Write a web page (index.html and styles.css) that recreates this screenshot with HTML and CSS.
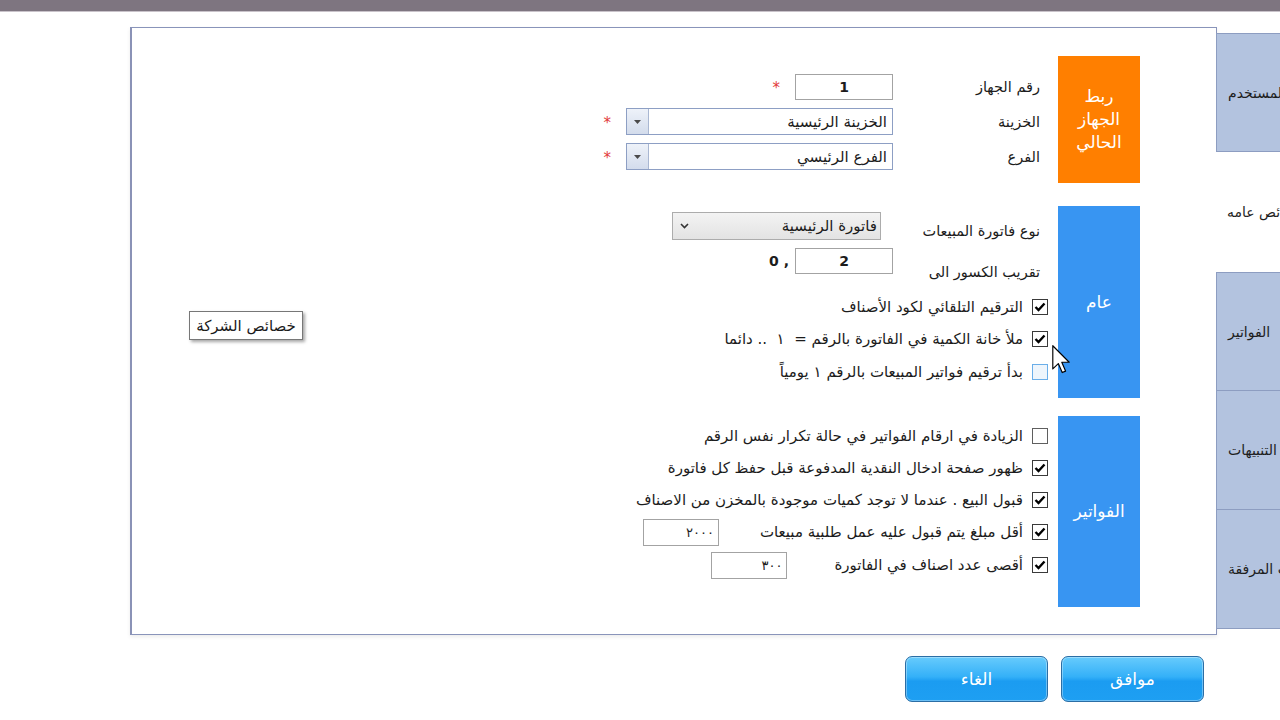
FILE: index.html
```html
<!DOCTYPE html>
<html lang="ar">
<head>
<meta charset="utf-8">
<title>خصائص عامه</title>
<link rel="stylesheet" href="styles.css">
</head>
<body>
<div class="topbar"></div>

<div class="stage">
  <div class="panel" dir="rtl">

    <section class="group g1">
      <div class="tag orange">ربط<br>الجهاز<br>الحالي</div>
      <div class="fields">
        <div class="frow">
          <span class="lbl">رقم الجهاز</span>
          <div class="txt bold">1</div>
          <span class="req">*</span>
        </div>
        <div class="frow">
          <span class="lbl">الخزينة</span>
          <div class="combo"><span class="cval">الخزينة الرئيسية</span><span class="cbtn"><svg width="7" height="4" viewBox="0 0 7 4"><path d="M0 0H7L3.5 4Z" fill="#4a4a4a"/></svg></span></div>
          <span class="req">*</span>
        </div>
        <div class="frow">
          <span class="lbl">الفرع</span>
          <div class="combo"><span class="cval">الفرع الرئيسي</span><span class="cbtn"><svg width="7" height="4" viewBox="0 0 7 4"><path d="M0 0H7L3.5 4Z" fill="#4a4a4a"/></svg></span></div>
          <span class="req">*</span>
        </div>
      </div>
    </section>

    <section class="group g2">
      <div class="tag blue">عام</div>
      <div class="fields">
        <div class="frow r-sel">
          <span class="lbl lbl-bottom">نوع فاتورة المبيعات</span>
          <div class="select"><span>فاتورة الرئيسية</span><svg class="chev" width="9" height="6" viewBox="0 0 9 6"><path d="M1 1L4.5 4.5L8 1" fill="none" stroke="#333" stroke-width="1.6"/></svg></div>
        </div>
        <div class="frow r-round">
          <span class="lbl lbl-low">تقريب الكسور الى</span>
          <div class="txt bold">2</div>
          <span class="frac" dir="ltr">0 ,</span>
        </div>
        <div class="checks c2">
          <div class="crow">
            <span class="cb on"><svg width="12" height="10" viewBox="0 0 12 10"><path d="M1.5 5L4.5 8L10.5 1.5" fill="none" stroke="#000" stroke-width="2.4"/></svg></span>
            <span class="ctext">الترقيم التلقائي لكود الأصناف</span>
          </div>
          <div class="crow s1">
            <span class="cb on"><svg width="12" height="10" viewBox="0 0 12 10"><path d="M1.5 5L4.5 8L10.5 1.5" fill="none" stroke="#000" stroke-width="2.4"/></svg></span>
            <span class="ctext">ملأ خانة الكمية في الفاتورة بالرقم =&nbsp; ١ &nbsp;.. دائما</span>
          </div>
          <div class="crow s2">
            <span class="cb hover"></span>
            <span class="ctext">بدأ ترقيم فواتير المبيعات بالرقم ١ يومياً</span>
          </div>
        </div>
      </div>
    </section>

    <section class="group g3">
      <div class="tag blue">الفواتير</div>
      <div class="fields">
        <div class="checks c3">
          <div class="crow">
            <span class="cb"></span>
            <span class="ctext">الزيادة في ارقام الفواتير في حالة تكرار نفس الرقم</span>
          </div>
          <div class="crow s1">
            <span class="cb on"><svg width="12" height="10" viewBox="0 0 12 10"><path d="M1.5 5L4.5 8L10.5 1.5" fill="none" stroke="#000" stroke-width="2.4"/></svg></span>
            <span class="ctext">ظهور صفحة ادخال النقدية المدفوعة قبل حفظ كل فاتورة</span>
          </div>
          <div class="crow s1">
            <span class="cb on"><svg width="12" height="10" viewBox="0 0 12 10"><path d="M1.5 5L4.5 8L10.5 1.5" fill="none" stroke="#000" stroke-width="2.4"/></svg></span>
            <span class="ctext">قبول البيع . عندما لا توجد كميات موجودة بالمخزن من الاصناف</span>
          </div>
          <div class="crow s1">
            <span class="cb on"><svg width="12" height="10" viewBox="0 0 12 10"><path d="M1.5 5L4.5 8L10.5 1.5" fill="none" stroke="#000" stroke-width="2.4"/></svg></span>
            <span class="ctext">أقل مبلغ يتم قبول عليه عمل طلبية مبيعات</span>
            <div class="txt small gap-a">٢٠٠٠</div>
          </div>
          <div class="crow s2">
            <span class="cb on"><svg width="12" height="10" viewBox="0 0 12 10"><path d="M1.5 5L4.5 8L10.5 1.5" fill="none" stroke="#000" stroke-width="2.4"/></svg></span>
            <span class="ctext">أقصى عدد اصناف في الفاتورة</span>
            <div class="txt small gap-b">٣٠٠</div>
          </div>
        </div>
      </div>
    </section>

  </div>

  <div class="tabs">
    <div class="tab t1"><span dir="rtl">خصائص المستخدم</span></div>
    <div class="tab selected"><span dir="rtl">خصائص عامه</span></div>
    <div class="tab t3"><span dir="rtl">الفواتير</span></div>
    <div class="tab t4"><span dir="rtl">التنبيهات</span></div>
    <div class="tab t5"><span dir="rtl">الملفات المرفقة</span></div>
  </div>
</div>

<div class="actions" dir="rtl">
  <button class="btn">موافق</button>
  <button class="btn">الغاء</button>
</div>

<div class="tooltip" dir="rtl">خصائص الشركة</div>

<svg class="cursor" width="19" height="29" viewBox="0 0 13 20"><path d="M0.5 0.5V16.5L4.3 12.8L7 19L9.3 18L6.7 11.9H11.8Z" fill="#fff" stroke="#000" stroke-width="0.8" stroke-linejoin="round"/></svg>
</body>
</html>
```

FILE: styles.css
```css
html, body {
  margin: 0;
  padding: 0;
  background: #ffffff;
  width: 1280px;
  height: 720px;
  overflow: hidden;
  font-family: "DejaVu Sans", sans-serif;
  font-size: 15px;
  color: #1c1c1c;
}

.topbar {
  height: 11px;
  background: #7e7580;
  border-bottom: 1px solid #c9c3ca;
}

.stage {
  direction: ltr;
  display: flex;
  align-items: flex-start;
  margin-top: 15px;
  padding-left: 130px;
}

.panel {
  border: 1px solid #8994ba;
  border-left: 2px solid #8a92b6;
  background: #fff;
  box-shadow: 0 2px 4px rgba(0, 0, 0, 0.08);
  padding: 28px 76px 0 0;
  box-sizing: border-box;
  width: 1087px;
  height: 608px;
  display: flex;
  flex-direction: column;
}

.group {
  display: flex;
  flex-direction: row;
}

.g1 { height: 127px; }
.g2 { height: 192px; margin-top: 23px; }
.g3 { height: 191px; margin-top: 18px; }

.tag {
  width: 82px;
  flex: none;
  color: #fff;
  font-size: 17px;
  line-height: 23px;
  display: flex;
  align-items: center;
  justify-content: center;
  text-align: center;
}

.orange { background: #ff7f00; }
.blue { background: #3895f2; }

.fields {
  display: flex;
  flex-direction: column;
  flex: 1;
}

.g1 .fields { padding-top: 17px; gap: 8px; }
.g2 .fields { padding-top: 6px; }

.frow {
  display: flex;
  align-items: center;
  padding-right: 18px;
  height: 27px;
}

.lbl {
  width: 147px;
  flex: none;
  white-space: nowrap;
  font-size: 14.5px;
}

.r-sel { height: 28px; align-items: flex-end; }
.r-sel .select { margin-right: 12px; }
.lbl-bottom { line-height: 17px; }

.r-round { margin-top: 8px; height: 26px; align-items: flex-start; }
.lbl-low { padding-top: 16px; line-height: 16px; }

.txt {
  width: 98px;
  height: 26px;
  box-sizing: border-box;
  border: 1px solid #a3a3a3;
  background: #fff;
  display: flex;
  align-items: center;
  justify-content: center;
  flex: none;
}

.bold { font-weight: bold; font-size: 14px; }

.txt.small {
  width: 76px;
  height: 27px;
  justify-content: flex-start;
  padding-right: 4px;
  font-size: 13px;
  color: #222;
}

.req {
  color: #e23b3b;
  font-size: 15px;
  margin-right: 15px;
  line-height: 1;
  padding-top: 4px;
}

.frac {
  font-weight: bold;
  font-size: 14px;
  margin-right: 6px;
  margin-top: 5px;
}

.combo {
  width: 267px;
  height: 27px;
  box-sizing: border-box;
  border: 1px solid #8d9fc4;
  background: #fff;
  display: flex;
  align-items: stretch;
  flex: none;
}

.cval {
  flex: 1;
  padding-right: 5px;
  display: flex;
  align-items: center;
}

.cbtn {
  width: 21px;
  border-right: 1px solid #a9b7d2;
  background: linear-gradient(#eef2f9, #d3dcec);
  display: flex;
  align-items: center;
  justify-content: center;
}

.select {
  width: 209px;
  height: 28px;
  box-sizing: border-box;
  border: 1px solid #acacac;
  background: linear-gradient(#f3f3f3, #e3e3e3);
  display: flex;
  align-items: center;
  justify-content: space-between;
  padding: 0 3px 0 7px;
  flex: none;
}

.checks {
  display: flex;
  flex-direction: column;
}

.c2 { margin-top: 20px; }
.c3 { padding-top: 7px; }

.crow {
  display: flex;
  align-items: center;
  height: 26px;
  padding-right: 10px;
}

.crow.s1 { margin-top: 6px; }
.crow.s2 { margin-top: 7px; }

.cb {
  width: 16px;
  height: 16px;
  box-sizing: border-box;
  border: 1px solid #3a3a3a;
  background: #fff;
  display: flex;
  align-items: center;
  justify-content: center;
  flex: none;
}

.c3 .crow:first-child .cb { border-color: #5f5f5f; }

.cb.hover {
  border-color: #6aaee9;
  background: #eef5fc;
}

.ctext {
  margin-right: 9px;
  white-space: nowrap;
}

.gap-a { margin-right: 41px; }
.gap-b { margin-right: 47px; }

.tabs {
  width: 64px;
  margin-left: -1px;
  margin-top: 6px;
  display: flex;
  flex-direction: column;
  position: relative;
}

.tab {
  direction: ltr;
  text-align: left;
  white-space: nowrap;
  overflow: hidden;
  box-sizing: border-box;
  padding-left: 11px;
  display: flex;
  align-items: center;
  background: #b3c3df;
  border: 1px solid #8d9dc1;
  border-right: none;
  color: #1d1d1d;
  font-size: 14px;
}

.tab span { flex: none; }

.t1 { height: 119px; }
.selected {
  height: 120px;
  background: #fff;
  border: none;
}
.t3 { height: 119px; }
.t4 { height: 120px; margin-top: -1px; }
.t5 { height: 120px; margin-top: -1px; }

.actions {
  display: flex;
  gap: 13px;
  padding-right: 76px;
  margin-top: 21px;
}

.btn {
  width: 143px;
  height: 46px;
  border: 1px solid #2b6ea5;
  border-radius: 7px;
  background: linear-gradient(#67cbfc 0%, #34b0f8 45%, #1b9cf1 55%, #1e9ff2 100%);
  box-shadow: inset 0 0 0 1px rgba(255, 255, 255, 0.35);
  color: #fff;
  font-family: "DejaVu Sans", sans-serif;
  font-size: 17px;
  padding: 0;
}

.tooltip {
  position: absolute;
  left: 189px;
  top: 311px;
  width: 114px;
  height: 29px;
  box-sizing: border-box;
  border: 1px solid #777;
  background: #fff;
  box-shadow: 2px 2px 3px rgba(0, 0, 0, 0.35);
  display: flex;
  align-items: center;
  justify-content: center;
  font-size: 15px;
  color: #1a1a1a;
}

.cursor {
  position: absolute;
  left: 1052px;
  top: 345px;
}
```
